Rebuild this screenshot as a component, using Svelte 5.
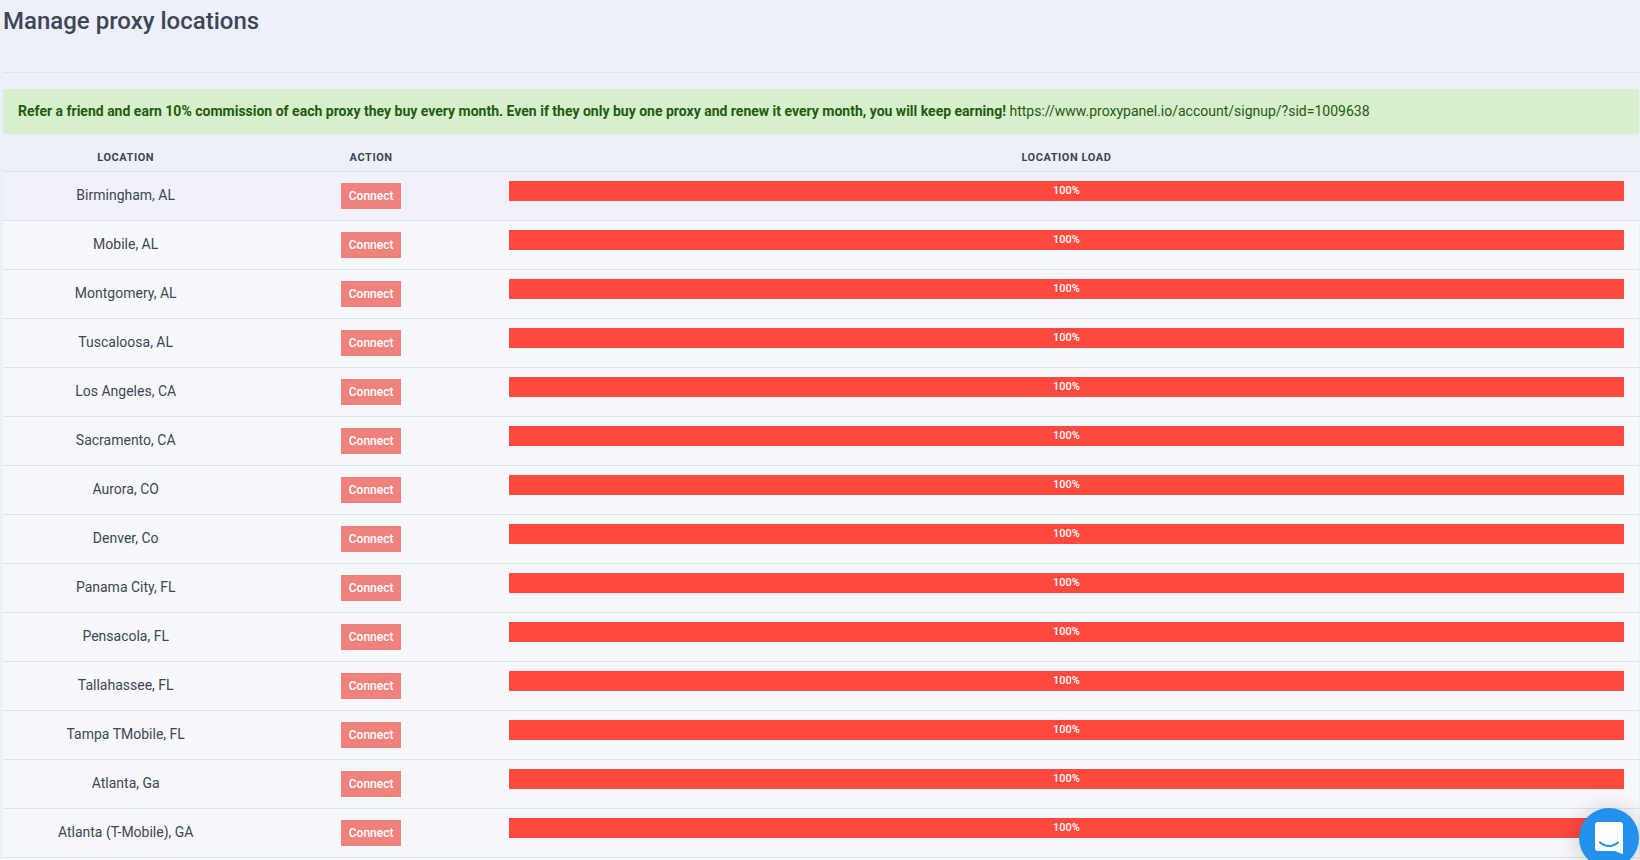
<script>
  const referral = "https://www.proxypanel.io/account/signup/?sid=1009638";
  let locations = [
    { name: "Birmingham, AL", load: 100 },
    { name: "Mobile, AL", load: 100 },
    { name: "Montgomery, AL", load: 100 },
    { name: "Tuscaloosa, AL", load: 100 },
    { name: "Los Angeles, CA", load: 100 },
    { name: "Sacramento, CA", load: 100 },
    { name: "Aurora, CO", load: 100 },
    { name: "Denver, Co", load: 100 },
    { name: "Panama City, FL", load: 100 },
    { name: "Pensacola, FL", load: 100 },
    { name: "Tallahassee, FL", load: 100 },
    { name: "Tampa TMobile, FL", load: 100 },
    { name: "Atlanta, Ga", load: 100 },
    { name: "Atlanta (T-Mobile), GA", load: 100 }
  ];
</script>

<style>
  :global(body) {
    background: #edf0f9;
    color: #3d4654;
    font-family: Roboto, "Liberation Sans", sans-serif;
    font-size: 14px;
    line-height: 20px;
  }
  main {
    padding: 0 1px 0 3px;
  }
  h1 {
    margin: 0;
    padding: 5px 0 35px;
    font-size: 24px;
    font-weight: 500;
    line-height: 32px;
    border-bottom: 1px solid #dfe2eb;
  }
  .alert {
    margin: 16px 0 8px;
    padding: 12px 15px 13px;
    border-radius: 3px;
    background: #d7efcc;
    color: #235a0e;
  }
  .alert strong {
    font-weight: 700;
  }
  .alert a {
    color: inherit;
    text-decoration: none;
  }

  .panel {
    padding-bottom: 2px;
    background: #f7f8fc;
  }
  table {
    width: 100%;
    table-layout: fixed;
    border-collapse: separate;
    border-spacing: 0;
    text-align: center;
  }
  .narrow {
    width: 15%;
  }
  th {
    box-sizing: border-box;
    height: 30px;
    padding: 2px 15px 0;
    background: #edf0f9;
    border-bottom: 1px solid #dfe2eb;
    font-size: 11px;
    font-weight: 700;
    letter-spacing: 0.05em;
    text-transform: uppercase;
  }
  td {
    box-sizing: border-box;
    height: 49px;
    padding: 0 15px 2px;
    border-bottom: 1px solid #dfe2eb;
  }
  tbody tr:first-child {
    background: #f0f1f9;
  }
  td.action {
    padding-bottom: 0;
  }
  td.load {
    padding-top: 9px;
    vertical-align: top;
  }
  .connect {
    display: block;
    height: 26px;
    margin: 0 auto;
    padding: 0 8px 1px;
    border: 0;
    background: #f0827e;
    color: #fff;
    font-family: inherit;
    font-size: 12px;
    font-weight: 500;
    cursor: pointer;
  }
  .bar {
    height: 20px;
    background: #ff483e;
    color: #fff;
    font-size: 11px;
    font-weight: 500;
  }

  .messenger {
    position: fixed;
    right: 1px;
    bottom: -8px;
    width: 60px;
    height: 60px;
    padding: 0;
    border: 0;
    border-radius: 50%;
    background: #2390eb;
    box-shadow: 0 2px 24px rgba(0, 0, 0, 0.2);
    cursor: pointer;
  }
  .messenger svg {
    display: block;
    margin: 0 auto;
  }
</style>

<main>
  <h1>Manage proxy locations</h1>

  <div class="alert">
    <strong>Refer a friend and earn 10% commission of each proxy they buy every month. Even if they only buy one proxy and renew it every month, you will keep earning!</strong>
    <a href={referral}>{referral}</a>
  </div>

  <div class="panel">
    <table>
      <thead>
        <tr>
          <th class="narrow">Location</th>
          <th class="narrow">Action</th>
          <th>Location load</th>
        </tr>
      </thead>
      <tbody>
        {#each locations as { name, load }}
          <tr>
            <td>{name}</td>
            <td class="action"><button class="connect">Connect</button></td>
            <td class="load">
              <div class="bar" style="width: {load}%">{load}%</div>
            </td>
          </tr>
        {/each}
      </tbody>
    </table>
  </div>
</main>

<button class="messenger" aria-label="Open chat">
  <svg width="28" height="32" viewBox="0 0 28 32">
    <path fill="#fff" d="M3 0h22a3 3 0 0 1 3 3v29s-4-1-8-3H3a3 3 0 0 1-3-3V3a3 3 0 0 1 3-3z" />
    <path fill="none" stroke="#2390eb" stroke-width="2" stroke-linecap="round" d="M5 20.500c5 4.500 13 4.500 18 0" />
  </svg>
</button>
